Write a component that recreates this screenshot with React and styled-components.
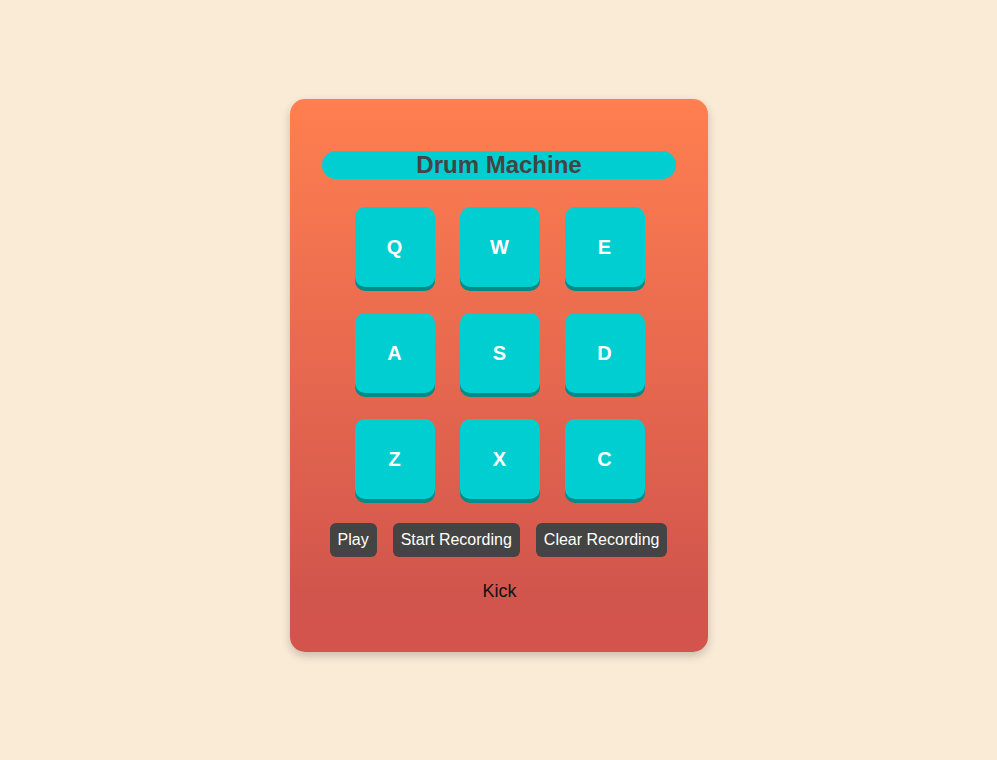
import React from "react";
import styled, { createGlobalStyle } from "styled-components";

const Global = createGlobalStyle`
  html, body { margin: 0; padding: 0; }
  body {
    background: #faebd7;
    font-family: "Liberation Sans", Arial, sans-serif;
  }
`;

const Page = styled.div`
  height: 760px;
  display: flex;
  justify-content: center;
  padding-top: 99px;
  box-sizing: border-box;
`;

const Card = styled.div`
  width: 418px;
  height: 553px;
  box-sizing: border-box;
  border-radius: 15px;
  background: linear-gradient(to bottom, #ff7f50 0%, #d2554d 90%, #d2544d 100%);
  box-shadow: 0 4px 10px rgba(0, 0, 0, 0.2);
  display: flex;
  flex-direction: column;
  align-items: center;
  padding: 52px 32px 0;
`;

const Title = styled.h1`
  margin: 0;
  width: 100%;
  height: 28px;
  line-height: 28px;
  border-radius: 14px;
  background: #00ced1;
  color: #444;
  font-size: 24px;
  font-weight: bold;
  text-align: center;
  padding-left: 1px;
  box-sizing: border-box;
`;

const Grid = styled.div`
  margin-top: 28px;
  display: grid;
  grid-template-columns: repeat(3, 80px);
  column-gap: 25px;
  row-gap: 26px;
  padding-left: 2px;
`;

const Pad = styled.button`
  width: 80px;
  height: 80px;
  border: none;
  border-radius: 10px;
  background: #00ced1;
  box-shadow: 0 4px 0 #008b8b;
  color: #fff;
  font-family: "Liberation Sans", Arial, sans-serif;
  font-size: 20px;
  font-weight: bold;
  padding: 0;
  cursor: pointer;
`;

const Controls = styled.div`
  margin-top: 24px;
  display: flex;
  gap: 16px;
`;

const Control = styled.button`
  border: none;
  border-radius: 6px;
  background: #444;
  color: #fff;
  font-family: "Liberation Sans", Arial, sans-serif;
  font-size: 16px;
  line-height: 18px;
  padding: 8px 8px;
  cursor: pointer;
`;

const Display = styled.p`
  margin: 24px 0 0;
  font-size: 18px;
  color: #111;
  padding-left: 2px;
`;

const keys = ["Q", "W", "E", "A", "S", "D", "Z", "X", "C"];

export default function App() {
  return (
    <>
      <Global />
      <Page>
        <Card>
          <Title>Drum Machine</Title>
          <Grid>
            {keys.map((k) => (
              <Pad key={k}>{k}</Pad>
            ))}
          </Grid>
          <Controls>
            <Control>Play</Control>
            <Control>Start Recording</Control>
            <Control>Clear Recording</Control>
          </Controls>
          <Display>Kick</Display>
        </Card>
      </Page>
    </>
  );
}
